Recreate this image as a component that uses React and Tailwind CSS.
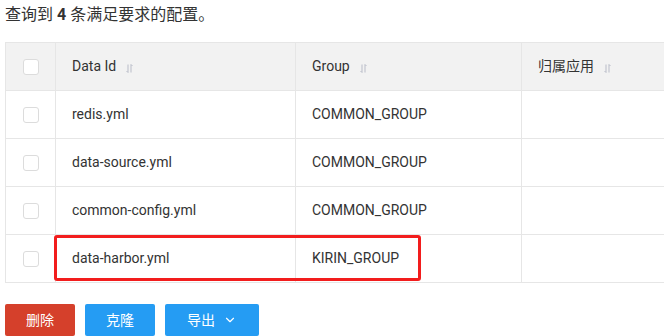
import { ChevronDown } from 'lucide-react';

const rows = [
  { id: 'redis.yml', group: 'COMMON_GROUP' },
  { id: 'data-source.yml', group: 'COMMON_GROUP' },
  { id: 'common-config.yml', group: 'COMMON_GROUP' },
  { id: 'data-harbor.yml', group: 'KIRIN_GROUP' },
];

const SortIcon = () => (
  <svg className="ml-[10px] mt-1 h-[9px] w-[7px]" viewBox="0 0 7 9" fill="none" stroke="#b9bcc8" strokeWidth="1">
    <path d="M2 0.5v8M0.5 7l1.5 1.5" />
    <path d="M5 8.5v-8M6.5 2L5 0.5" />
  </svg>
);

const Checkbox = () => (
  <span className="block h-4 w-4 rounded-[3px] border border-[#dcdcdc] bg-white" />
);

export default function App() {
  return (
    <div className="h-[336px] w-[664px] overflow-hidden bg-white pl-[5px] font-['Roboto','Noto_Sans_CJK_SC',sans-serif] text-[#333]">
      <div className="h-[42px] pt-[4px] text-[16px] leading-[22px] text-[#333]">
        查询到 <b className="font-bold">4</b> 条满足要求的配置。
      </div>

      <div className="relative w-[760px]">
        <table className="w-full border-collapse text-[14px]">
          <thead>
            <tr className="h-[48px] bg-[#f2f2f2]">
              <th className="w-[50px] border border-[#e6e6e6] px-0">
                <div className="flex justify-center"><Checkbox /></div>
              </th>
              <th className="w-[240px] border border-[#e6e6e6] pl-[16px] text-left font-normal">
                <div className="flex items-center">Data Id<SortIcon /></div>
              </th>
              <th className="w-[226px] border border-[#e6e6e6] pl-[16px] text-left font-normal">
                <div className="flex items-center">Group<SortIcon /></div>
              </th>
              <th className="border border-[#e6e6e6] pl-[16px] text-left font-normal">
                <div className="flex items-center">归属应用<SortIcon /></div>
              </th>
            </tr>
          </thead>
          <tbody>
            {rows.map((r) => (
              <tr key={r.id} className="h-[48px]">
                <td className="border border-[#e6e6e6]">
                  <div className="flex justify-center"><Checkbox /></div>
                </td>
                <td className="border border-[#e6e6e6] pl-[16px]">{r.id}</td>
                <td className="border border-[#e6e6e6] pl-[16px]">{r.group}</td>
                <td className="border border-[#e6e6e6]"></td>
              </tr>
            ))}
          </tbody>
        </table>
        {/* highlight annotation */}
        <div className="pointer-events-none absolute left-[49px] top-[193px] h-[46px] w-[367px] rounded-[3px] border-[3px] border-[#f21d1d]" />
      </div>

      <div className="mt-[21px] flex gap-[10px] text-[14px] text-white">
        <button className="h-[32px] w-[70px] rounded-[2px] bg-[#d5402b]">删除</button>
        <button className="h-[32px] w-[70px] rounded-[2px] bg-[#259cf3]">克隆</button>
        <button className="flex h-[32px] w-[94px] items-center justify-center gap-[8px] rounded-[2px] bg-[#259cf3]">
          导出<ChevronDown size={14} strokeWidth={2} />
        </button>
      </div>
    </div>
  );
}
